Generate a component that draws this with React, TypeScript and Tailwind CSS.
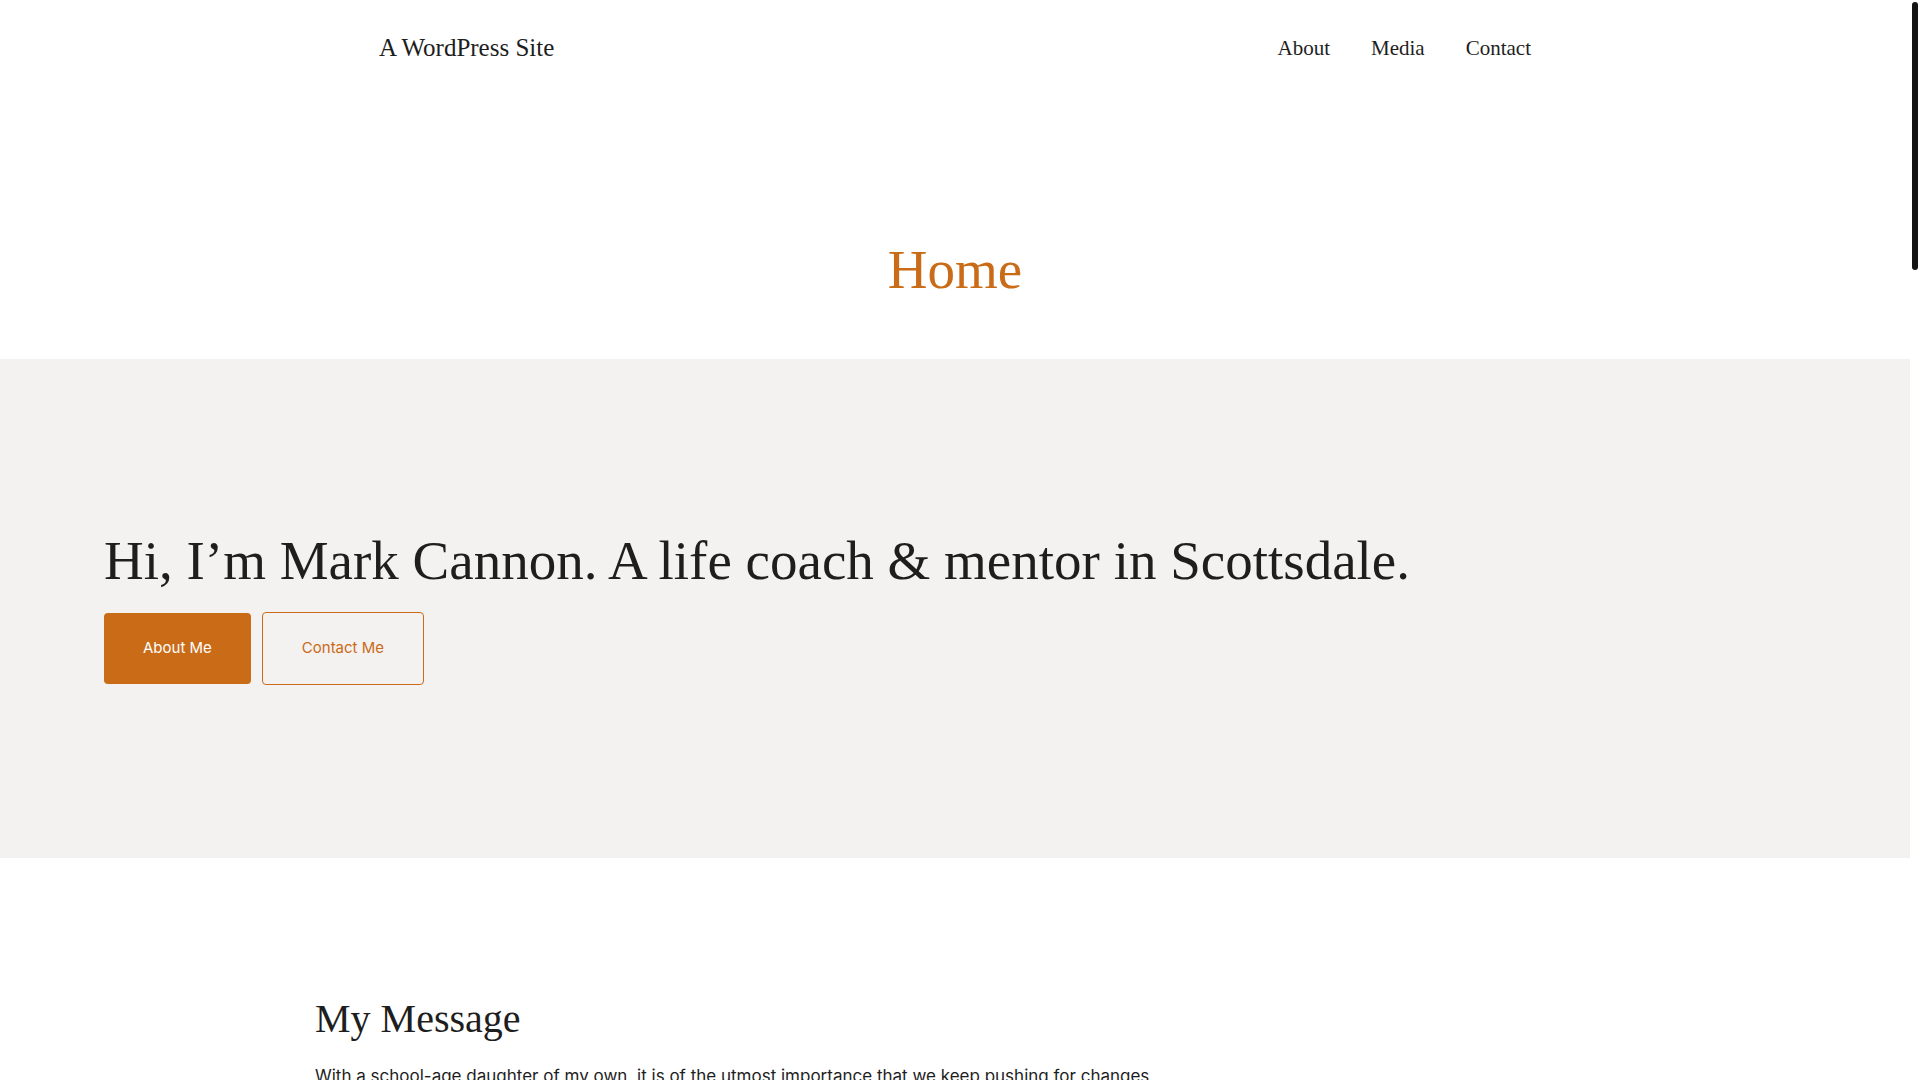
const serif = { fontFamily: '"Liberation Serif", "Times New Roman", serif' };
const sans = { fontFamily: 'Inter, "Liberation Sans", Arial, sans-serif' };

function Header() {
  return (
    <header className="flex h-[96px] items-center">
      <div className="mx-auto flex w-[1152px] items-center justify-between">
        <a href="#" className="text-[25px] leading-[1.15] text-[#1e1e1e]" style={serif}>
          A WordPress Site
        </a>
        <nav className="flex items-center gap-[41px] text-[21px] leading-[1.15] text-[#1e1e1e]" style={serif}>
          <a href="#">About</a>
          <a href="#">Media</a>
          <a href="#">Contact</a>
        </nav>
      </div>
    </header>
  );
}

function Hero() {
  return (
    <section className="bg-[#f3f2f0] pl-[104px] pt-[169px] pb-[173px]">
      <h2 className="text-[55px] leading-[1.2] text-[#1e1e1e]" style={serif}>
        Hi, I’m Mark Cannon. A life coach &amp; mentor in Scottsdale.
      </h2>
      <div className="mt-[18px] flex items-center gap-[11px]" style={sans}>
        <a
          href="#"
          className="flex h-[71px] items-center rounded-[4px] bg-[#ca6b18] px-[39px] text-[15px] text-white"
        >
          About Me
        </a>
        <a
          href="#"
          className="flex h-[73px] items-center rounded-[4px] border border-[#ca6b18] px-[39px] text-[15px] text-[#ca6b18]"
        >
          Contact Me
        </a>
      </div>
    </section>
  );
}

export default function App() {
  return (
    <div className="flex h-[1080px] w-[1920px] overflow-hidden bg-white">
      <main className="flex-1">
        <Header />
        <h1
          className="mt-[141px] mb-[56px] text-center text-[55px] leading-[1.2] text-[#ca6b18]"
          style={serif}
        >
          Home
        </h1>
        <Hero />
        <div className="mx-auto w-[1280px] pt-[137px]">
          <h2 className="text-[40px] leading-[1.2] text-[#1e1e1e]" style={serif}>
            My Message
          </h2>
          <p className="mt-[20px] max-w-[850px] text-[17px] leading-[1.6] text-[#1e1e1e]" style={sans}>
            With a school-age daughter of my own, it is of the utmost importance that we keep pushing for changes
            in our schools and communities so that every child has the chance to grow and thrive.
          </p>
        </div>
      </main>
      <aside className="w-[10px] pt-[2px] pl-[2px]">
        <div className="h-[268px] w-[6px] rounded-full bg-[#141414]" />
      </aside>
    </div>
  );
}
